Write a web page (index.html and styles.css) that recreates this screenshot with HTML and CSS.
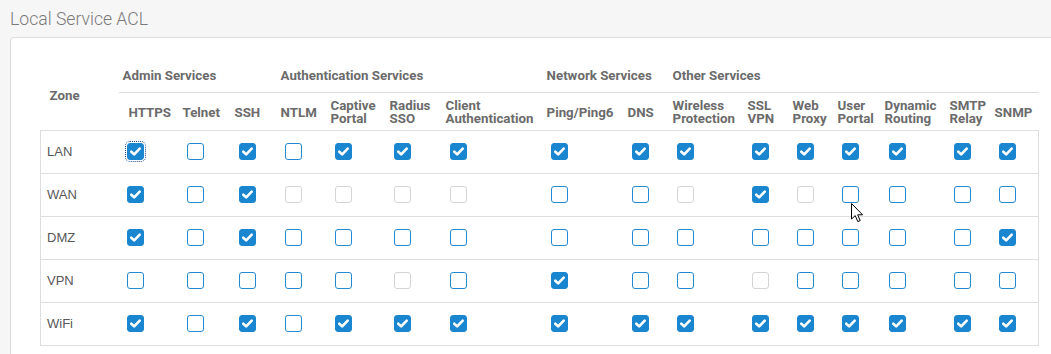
FILE: index.html
```html
<!DOCTYPE html>
<html lang="en">
<head>
  <meta charset="UTF-8" />
  <title>Local Service ACL</title>
  <link rel="stylesheet" href="styles.css">
</head>
<body>
  <div class="page">
    <h1 class="title">Local Service ACL</h1>

    <div class="card">
      <table class="acl">
        <colgroup>
          <col class="c-zone"><col class="c-https"><col class="c-telnet"><col class="c-ssh">
          <col class="c-ntlm"><col class="c-captive"><col class="c-radius"><col class="c-client">
          <col class="c-ping"><col class="c-dns"><col class="c-wireless"><col class="c-ssl">
          <col class="c-web"><col class="c-user"><col class="c-dynamic"><col class="c-smtp"><col class="c-snmp">
        </colgroup>
        <thead>
          <tr class="groups">
            <th class="zone" rowspan="2">Zone</th>
            <th colspan="3">Admin Services</th>
            <th colspan="4">Authentication Services</th>
            <th colspan="2">Network Services</th>
            <th colspan="7">Other Services</th>
          </tr>
          <tr class="services">
            <th class="first">HTTPS</th>
            <th>Telnet</th>
            <th>SSH</th>
            <th>NTLM</th>
            <th>Captive<br>Portal</th>
            <th>Radius<br>SSO</th>
            <th>Client<br>Authentication</th>
            <th>Ping/Ping6</th>
            <th>DNS</th>
            <th>Wireless<br>Protection</th>
            <th>SSL<br>VPN</th>
            <th>Web<br>Proxy</th>
            <th>User<br>Portal</th>
            <th>Dynamic<br>Routing</th>
            <th>SMTP<br>Relay</th>
            <th>SNMP</th>
          </tr>
        </thead>
        <tbody id="rows"></tbody>
      </table>
    </div>
  </div>

  <svg class="cursor" width="13" height="20" viewBox="0 0 13 20">
    <path d="M0.5 0.5 L0.5 16 L4.2 12.6 L6.8 18.6 L9.2 17.6 L6.7 11.8 L11.6 11.8 Z" fill="#fff" stroke="#000" stroke-width="1" stroke-linejoin="round"/>
  </svg>

  <script>
    // 1 = checked, 0 = unchecked, 2 = not available for zone
    const zones = [
      ["LAN",  [1,0,1,0,1,1,1,1,1,1,1,1,1,1,1,1]],
      ["WAN",  [1,0,1,2,2,2,2,0,0,2,1,2,0,0,0,0]],
      ["DMZ",  [1,0,1,0,0,0,0,0,0,0,0,0,0,0,0,1]],
      ["VPN",  [0,0,0,0,0,2,0,1,0,0,2,0,0,0,0,0]],
      ["WiFi", [1,0,1,0,1,1,1,1,1,1,1,1,1,1,1,1]]
    ];

    const body = document.getElementById("rows");
    zones.forEach(([name, states], r) => {
      const tr = document.createElement("tr");
      let html = `<td class="zone-name">${name}</td>`;
      states.forEach((s, c) => {
        const focus = (r === 0 && c === 0) ? " focused" : "";
        html += `<td><input type="checkbox" class="cb${focus}"${s === 1 ? " checked" : ""}${s === 2 ? " disabled" : ""}></td>`;
      });
      tr.innerHTML = html;
      body.appendChild(tr);
    });
  </script>
</body>
</html>
```

FILE: styles.css
```css
html, body {
  margin: 0;
  overflow: hidden;
}
body {
  background-color: #f6f6f6;
  font-family: Roboto, "Liberation Sans", Arial, sans-serif;
  position: relative;
  height: 354px;
}
.page {
  padding: 9px 0 0 10px;
}
.title {
  margin: 0 0 8px;
  font-size: 17.6px;
  line-height: 20px;
  font-weight: 300;
  color: #7a7a7a;
}
.card {
  background-color: #fff;
  border: 1px solid #dcdcdc;
  border-radius: 4px;
  margin-right: -30px;
  padding: 20px 0 30px 29px;
}
.acl {
  width: 998px;
  table-layout: fixed;
  border-collapse: collapse;
}
.c-zone { width: 78px; }
.c-https { width: 60px; }
.c-telnet { width: 52px; }
.c-ssh { width: 46px; }
.c-ntlm { width: 50px; }
.c-captive { width: 59px; }
.c-radius { width: 56px; }
.c-client { width: 101px; }
.c-ping { width: 81px; }
.c-dns { width: 45px; }
.c-wireless { width: 75px; }
.c-ssl { width: 45px; }
.c-web { width: 45px; }
.c-user { width: 47px; }
.c-dynamic { width: 65px; }
.c-smtp { width: 45px; }
.c-snmp { width: 48px; }

.acl th {
  text-align: left;
  font-size: 13.3px;
  font-weight: 700;
  line-height: 13px;
  color: #6b6b6b;
  padding: 0 0 0 4px;
  white-space: nowrap;
  overflow: visible;
}
.acl .groups th {
  height: 34px;
}
.acl .services th {
  height: 36px;
  border-top: 1px solid #dedede;
  padding-top: 1px;
}
.acl .services th.first {
  padding-left: 10px;
}
.acl th.zone {
  padding-left: 9px;
  padding-top: 2px;
}
.acl tbody tr {
  height: 43px;
}
.acl td {
  padding: 0 0 0 8px;
  border-top: 1px solid #dedede;
  border-bottom: 1px solid #dedede;
  vertical-align: middle;
}
.acl td:first-child {
  border-left: 1px solid #dedede;
}
.acl td:last-child {
  border-right: 1px solid #dedede;
}
.acl td.zone-name {
  padding-left: 6px;
  padding-bottom: 2px;
  font-family: "Liberation Sans", Arial, sans-serif;
  font-size: 13px;
  color: #585858;
}

.cb {
  appearance: none;
  -webkit-appearance: none;
  display: block;
  box-sizing: border-box;
  width: 17px;
  height: 17px;
  margin: -2px 0 0;
  border: 1.5px solid #2389d3;
  border-radius: 3px;
  background-color: #fff;
}
.cb:checked {
  border-color: #1b86d0;
  background: #1b86d0 url("data:image/svg+xml,%3Csvg xmlns='http://www.w3.org/2000/svg' viewBox='0 0 16 16'%3E%3Cpolyline points='3.5,8.2 6.6,11.1 12.5,5' fill='none' stroke='%23fff' stroke-width='2.8' stroke-linecap='round' stroke-linejoin='round'/%3E%3C/svg%3E") center / 15px 15px no-repeat;
}
.cb:disabled {
  border-color: #d4d4d4;
}
.cb.focused {
  outline: 1px dotted #1b4f86;
  outline-offset: 1px;
}

.cursor {
  position: absolute;
  left: 851px;
  top: 203px;
}
```
